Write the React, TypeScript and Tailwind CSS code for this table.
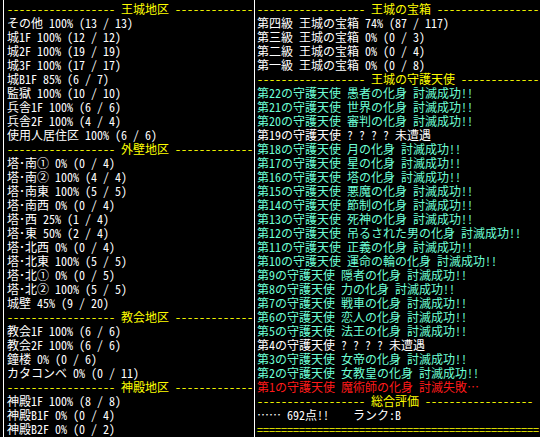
const dash = (n: number) => "-".repeat(n)

type Line = { text: string; kind?: "head" | "ok" | "none" | "fail" | "plain" }

const head = (title: string, l: number, r: number): Line => ({
  text: `${dash(l)} ${title} ${dash(r)}`,
  kind: "head",
})

const left: Line[] = [
  head("王城地区", 18, 13),
  { text: "その他 100% (13 / 13)" },
  { text: "城1F 100% (12 / 12)" },
  { text: "城2F 100% (19 / 19)" },
  { text: "城3F 100% (17 / 17)" },
  { text: "城B1F 85% (6 / 7)" },
  { text: "監獄 100% (10 / 10)" },
  { text: "兵舎1F 100% (6 / 6)" },
  { text: "兵舎2F 100% (4 / 4)" },
  { text: "使用人居住区 100% (6 / 6)" },
  head("外壁地区", 18, 13),
  { text: "塔･南① 0% (0 / 4)" },
  { text: "塔･南② 100% (4 / 4)" },
  { text: "塔･南東 100% (5 / 5)" },
  { text: "塔･南西 0% (0 / 4)" },
  { text: "塔･西 25% (1 / 4)" },
  { text: "塔･東 50% (2 / 4)" },
  { text: "塔･北西 0% (0 / 4)" },
  { text: "塔･北東 100% (5 / 5)" },
  { text: "塔･北① 0% (0 / 5)" },
  { text: "塔･北② 100% (5 / 5)" },
  { text: "城壁 45% (9 / 20)" },
  head("教会地区", 18, 13),
  { text: "教会1F 100% (6 / 6)" },
  { text: "教会2F 100% (6 / 6)" },
  { text: "鐘楼 0% (0 / 6)" },
  { text: "カタコンベ 0% (0 / 11)" },
  head("神殿地区", 18, 13),
  { text: "神殿1F 100% (8 / 8)" },
  { text: "神殿B1F 0% (0 / 4)" },
  { text: "神殿B2F 0% (0 / 2)" },
]

// guardians, 22 down to 1 (null = not met yet)
const guardians: (string | null)[] = [
  "愚者", "世界", "審判", null, "月", "星", "塔", "悪魔", "節制", "死神",
  "吊るされた男", "正義", "運命の輪", "隠者", "力", "戦車", "恋人", "法王",
  null, "女帝", "女教皇", "魔術師",
]

const right: Line[] = [
  head("王城の宝箱", 18, 17),
  { text: "第四級 王城の宝箱 74% (87 / 117)" },
  { text: "第三級 王城の宝箱 0% (0 / 3)" },
  { text: "第二級 王城の宝箱 0% (0 / 4)" },
  { text: "第一級 王城の宝箱 0% (0 / 8)" },
  head("王城の守護天使", 18, 13),
  ...guardians.map((name, i): Line => {
    const no = 22 - i
    if (name === null) return { text: `第${no}の守護天使 ? ? ? ? 未遭遇`, kind: "none" }
    if (no === 1) return { text: `第${no}の守護天使 ${name}の化身 討滅失敗…`, kind: "fail" }
    return { text: `第${no}の守護天使 ${name}の化身 討滅成功!!`, kind: "ok" }
  }),
  head("総合評価", 18, 18),
  { text: "…… 692点!!    ランク:B" },
  { text: "=".repeat(47), kind: "head" },
]

const color = {
  head: "text-[#ffff00]",
  ok: "text-[#6dffd6]",
  none: "text-white",
  fail: "text-[#ff1a1a]",
  plain: "text-white",
}

function Rows({ lines }: { lines: Line[] }) {
  return (
    <>
      {lines.map((l, i) => (
        <div key={i} className={`h-[14px] whitespace-pre ${color[l.kind ?? "plain"]}`}>
          {l.text}
        </div>
      ))}
    </>
  )
}

export default function App() {
  return (
    <div className="flex h-[437px] w-[540px] overflow-hidden bg-black font-['Noto_Sans_CJK_JP',sans-serif] text-[12px] leading-[14px] [font-feature-settings:'hwid']">
      <div className="ml-[3px] w-[251px] shrink-0 overflow-hidden border-l border-white pt-[2px] pl-[3px]">
        <Rows lines={left} />
      </div>
      <div className="min-w-0 flex-1 overflow-hidden border-l border-white pt-[2px] pl-[2px]">
        <Rows lines={right} />
      </div>
    </div>
  )
}
